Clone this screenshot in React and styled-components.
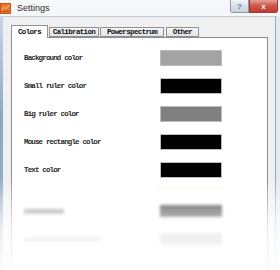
import React from "react";
import styled, { createGlobalStyle } from "styled-components";

const GlobalStyle = createGlobalStyle`
  html, body {
    margin: 0;
    padding: 0;
    background: #ffffff;
  }
  body {
    width: 280px;
    height: 270px;
    overflow: hidden;
  }
`;

const Window = styled.div`
  position: relative;
  width: 280px;
  height: 270px;
  overflow: hidden;
  display: flex;
  flex-direction: column;
  background: linear-gradient(#f6f8fa, #dde5ee);
`;

const TitleBar = styled.div`
  height: 16px;
  display: flex;
  align-items: flex-start;
  flex-shrink: 0;
`;

const AppIcon = styled.svg`
  margin-top: 3px;
  width: 11px;
  height: 11px;
  flex-shrink: 0;
`;

const Title = styled.span`
  margin: 3px 0 0 6px;
  font-family: "Liberation Sans", Arial, sans-serif;
  font-size: 9px;
  line-height: 10px;
  color: #2c2c2c;
`;

const Spacer = styled.div`
  flex: 1;
`;

const CaptionButton = styled.div`
  width: ${(p) => p.$w}px;
  height: 13px;
  box-sizing: border-box;
  display: flex;
  align-items: center;
  justify-content: center;
  font-family: "Liberation Sans", Arial, sans-serif;
  font-size: 8px;
  font-weight: bold;
  border: 1px solid ${(p) => (p.$close ? "#9e3a32" : "#8c9aae")};
  border-top: none;
  border-radius: 0 0 ${(p) => (p.$close ? "3px 0" : "0 3px")};
  color: ${(p) => (p.$close ? "#ffffff" : "#6c7788")};
  background: ${(p) =>
    p.$close
      ? "linear-gradient(#e6a096, #cf5a4c 45%, #c23a2c)"
      : "linear-gradient(#f2f5f8, #d9e0e8 50%, #c9d2dc)"};
`;

const Body = styled.div`
  flex: 1;
  display: flex;
`;

const Edge = styled.div`
  width: ${(p) => p.$w}px;
  flex-shrink: 0;
  background: ${(p) => p.$bg};
  border-left: ${(p) => (p.$line ? "1px solid #93a8c2" : "none")};
`;

const Client = styled.div`
  flex: 1;
  display: flex;
  flex-direction: column;
  background: #f0f0f0;
  border-top: 1px solid #c3ccd6;
  padding: 8px 7px 0 8px;
`;

const TabStrip = styled.div`
  display: flex;
  align-items: flex-end;
  gap: 1px;
  height: 12px;
  position: relative;
  z-index: 1;
`;

const Tab = styled.div`
  width: ${(p) => p.$w}px;
  height: ${(p) => (p.$active ? 13 : 10)}px;
  margin-right: ${(p) => p.$gap || 0}px;
  margin-bottom: ${(p) => (p.$active ? -1 : 0)}px;
  box-sizing: border-box;
  display: flex;
  align-items: center;
  justify-content: center;
  border: 1px solid #8e9196;
  border-bottom: ${(p) => (p.$active ? "none" : "1px solid #8e9196")};
  background: ${(p) =>
    p.$active ? "#ffffff" : "linear-gradient(#f6f6f6, #e3e3e3)"};
  font-family: "Liberation Mono", "Courier New", monospace;
  font-weight: bold;
  font-size: 7.5px;
  letter-spacing: -0.65px;
  color: #111;
  white-space: nowrap;
  overflow: hidden;
`;

const Pane = styled.div`
  flex: 1;
  background: #ffffff;
  border: 1px solid #898c95;
  border-bottom: none;
  padding: 12px 0 0 12px;
`;

const Grid = styled.div`
  display: grid;
  grid-template-columns: 136px 62px;
  row-gap: 12px;
  align-items: center;
`;

const Label = styled.span`
  font-family: "Liberation Mono", "Courier New", monospace;
  font-weight: bold;
  font-size: 7.5px;
  letter-spacing: -0.85px;
  color: #2a2a2a;
  white-space: nowrap;
`;

const Swatch = styled.div`
  height: 16px;
  box-sizing: border-box;
  border: 1px solid #bdbdbd;
  background: ${(p) => p.$color};
`;

const Ghost = styled.div`
  margin-top: 10px;
  display: grid;
  grid-template-columns: 136px 62px;
  align-items: center;
  filter: blur(1.6px);
`;

const GhostLine = styled.div`
  grid-column: 2;
  height: 1px;
  margin-left: -3px;
  width: 68px;
  background: #efe9c8;
`;

const GhostLabel = styled.div`
  height: 5px;
  width: ${(p) => p.$w}px;
  margin-top: ${(p) => p.$mt || 0}px;
  background: ${(p) => p.$c};
`;

const GhostSwatch = styled.div`
  height: ${(p) => p.$h}px;
  margin-top: ${(p) => p.$mt || 0}px;
  background: ${(p) => p.$c};
`;

const Fade = styled.div`
  position: absolute;
  left: 0;
  right: 0;
  top: 178px;
  bottom: 0;
  pointer-events: none;
  background: linear-gradient(
    rgba(255, 255, 255, 0) 0px,
    rgba(255, 255, 255, 0.4) 22px,
    rgba(255, 255, 255, 0.8) 50px,
    rgba(255, 255, 255, 0.96) 92px
  );
`;

const rows = [
  { label: "Background color", color: "#a3a3a3" },
  { label: "Small ruler color", color: "#000000" },
  { label: "Big ruler color", color: "#808080" },
  { label: "Mouse rectangle color", color: "#000000" },
  { label: "Text color", color: "#000000" },
];

const tabs = [
  { name: "Colors", w: 37, active: true },
  { name: "Calibration", w: 50 },
  { name: "Powerspectrum", w: 64, gap: 1 },
  { name: "Other", w: 33 },
];

export default function App() {
  return (
    <>
      <GlobalStyle />
      <Window>
        <TitleBar>
          <AppIcon viewBox="0 0 11 11">
            <rect x="0" y="0" width="11" height="11" fill="#e9782c" />
            <rect x="0.5" y="0.5" width="10" height="10" fill="none" stroke="#c8561a" />
            <path d="M2 7 L4 4 L6 6 L9 2" fill="none" stroke="#f8c08a" strokeWidth="1" />
            <rect x="2" y="8" width="7" height="1" fill="#b94c14" />
          </AppIcon>
          <Title>Settings</Title>
          <Spacer />
          <CaptionButton $w={19}>?</CaptionButton>
          <CaptionButton $w={29} $close>
            x
          </CaptionButton>
          <Edge $w={2} $bg="transparent" />
        </TitleBar>
        <Body>
          <Edge $w={3} $bg="linear-gradient(#c9d6e6, #8ea6c3 40%, #9fb3cc)" />
          <Client>
            <TabStrip>
              {tabs.map((t) => (
                <Tab key={t.name} $w={t.w} $active={t.active} $gap={t.gap}>
                  {t.name}
                </Tab>
              ))}
            </TabStrip>
            <Pane>
              <Grid>
                {rows.map((r) => (
                  <React.Fragment key={r.label}>
                    <Label>{r.label}</Label>
                    <Swatch $color={r.color} />
                  </React.Fragment>
                ))}
              </Grid>
              <Ghost>
                <GhostLine />
                <GhostLabel $w={40} $c="#8a8a8a" $mt={16} />
                <GhostSwatch $h={12} $mt={16} $c="#1e1e1e" />
                <GhostLabel $w={78} $c="#bdbdbd" $mt={16} />
                <GhostSwatch $h={12} $mt={16} $c="#a8a8a8" />
                <div />
                <GhostLine style={{ marginTop: 12 }} />
              </Ghost>
            </Pane>
          </Client>
          <Edge $w={4} $bg="#e3eaf2" $line />
        </Body>
        <Fade />
      </Window>
    </>
  );
}
